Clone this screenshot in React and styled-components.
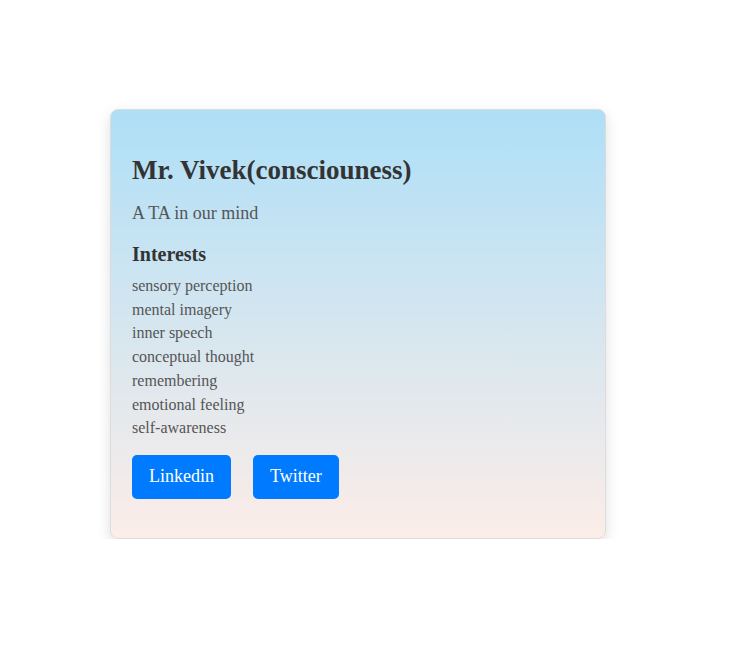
import React from "react";
import styled, { createGlobalStyle } from "styled-components";

const GlobalStyles = createGlobalStyle`
  body {
    margin: 0;
    background: #ffffff;
    font-family: "Liberation Serif", "Times New Roman", serif;
  }
`;

const Page = styled.div`
  padding: 109px 0 0 110px;
`;

const Card = styled.div`
  width: 496px;
  box-sizing: border-box;
  padding: 45px 21px 39px 21px;
  border-radius: 8px;
  border: 1px solid #dcdcdc;
  background: linear-gradient(to bottom, #aedff7, #fcede8);
  box-shadow: 0 5px 14px rgba(0, 0, 0, 0.13);
`;

const Title = styled.h1`
  margin: 0;
  font-size: 27px;
  font-weight: bold;
  color: #333;
`;

const Subtitle = styled.p`
  margin: 17px 0 0 0;
  font-size: 18px;
  color: #555;
`;

const SectionTitle = styled.h2`
  margin: 19px 0 0 0;
  font-size: 20px;
  font-weight: bold;
  color: #333;
`;

const InterestList = styled.ul`
  list-style: none;
  margin: 8px 0 0 0;
  padding: 0;
`;

const Interest = styled.li`
  font-size: 16px;
  line-height: 23.7px;
  color: #555;
`;

const Links = styled.div`
  display: flex;
  gap: 22px;
  margin-top: 15px;
`;

const LinkButton = styled.a`
  display: inline-flex;
  align-items: center;
  justify-content: center;
  height: 44px;
  padding: 0 17px;
  border-radius: 5px;
  background: #007bff;
  color: #fff;
  font-size: 18px;
  text-decoration: none;
`;

const interests = [
  "sensory perception",
  "mental imagery",
  "inner speech",
  "conceptual thought",
  "remembering",
  "emotional feeling",
  "self-awareness",
];

const App = () => {
  return (
    <>
      <GlobalStyles />
      <Page>
        <Card>
          <Title>Mr. Vivek(consciouness)</Title>
          <Subtitle>A TA in our mind</Subtitle>
          <SectionTitle>Interests</SectionTitle>
          <InterestList>
            {interests.map((item) => (
              <Interest key={item}>{item}</Interest>
            ))}
          </InterestList>
          <Links>
            <LinkButton href="#">Linkedin</LinkButton>
            <LinkButton href="#">Twitter</LinkButton>
          </Links>
        </Card>
      </Page>
    </>
  );
};

export default App;
